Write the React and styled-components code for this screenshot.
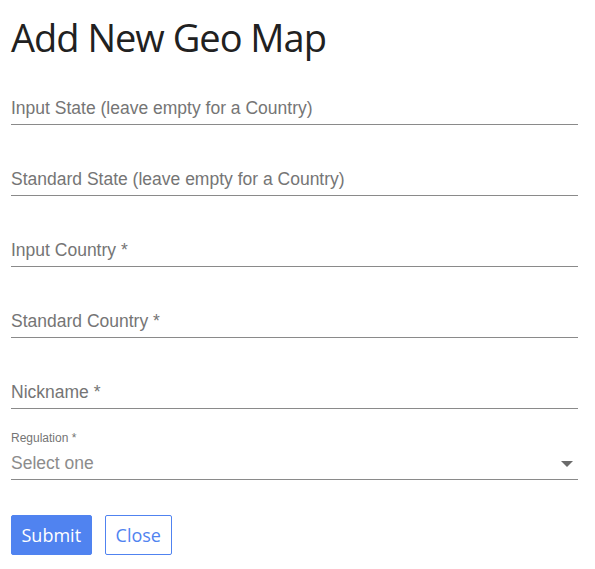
import styled, { createGlobalStyle } from "styled-components";

const Global = createGlobalStyle`
    body {
        margin: 0;
        background: #fff;
    }
`

const Page = styled.div`
    padding: 11px 17px 0 11px;
    font-family: "Liberation Sans", Arial, sans-serif;
`

const Title = styled.h1`
    margin: 0 0 26px;
    font-family: "Open Sans", sans-serif;
    font-weight: 400;
    font-size: 38px;
    line-height: 52px;
    color: #212121;
    letter-spacing: -1px;
`

const Field = styled.div`
    display: flex;
    flex-direction: column;
    justify-content: flex-end;
    height: 71px;
    border-bottom: 1px solid #8a8a8a;
    box-sizing: border-box;
    &:first-of-type {
        height: 36px;
    }
`

const Input = styled.input`
    border: none;
    outline: none;
    padding: 0 0 5px;
    font-family: inherit;
    font-size: 17.5px;
    color: #333;
    background: transparent;
    &::placeholder {
        color: #757575;
    }
`

const SmallLabel = styled.label`
    font-size: 12px;
    color: #757575;
    margin-bottom: 8px;
`

const SelectRow = styled.div`
    display: flex;
    align-items: center;
    justify-content: space-between;
    padding: 0 5px 5px 0;
    font-size: 17.5px;
    color: #8c8c8c;
`

const Arrow = styled.span`
    width: 0;
    height: 0;
    border-left: 6px solid transparent;
    border-right: 6px solid transparent;
    border-top: 6px solid #6b6b6b;
`

const Buttons = styled.div`
    display: flex;
    gap: 13px;
    margin-top: 35px;
`

const Button = styled.button`
    height: 40px;
    padding: 0 ${({ primary }) => primary ? '9.5px' : '10px'};
    border-radius: 2px;
    border: 1px solid #5083f0;
    background: ${({ primary }) => primary ? '#5083f0' : '#fff'};
    color: ${({ primary }) => primary ? '#fff' : '#5083f0'};
    font-family: "Open Sans", sans-serif;
    font-size: 18px;
    cursor: pointer;
`

export default function App() {
    return (
        <>
            <Global />
            <Page>
                <Title>Add New Geo Map</Title>
                <Field><Input placeholder="Input State (leave empty for a Country)" /></Field>
                <Field><Input placeholder="Standard State (leave empty for a Country)" /></Field>
                <Field><Input placeholder="Input Country *" /></Field>
                <Field><Input placeholder="Standard Country *" /></Field>
                <Field><Input placeholder="Nickname *" /></Field>
                <Field>
                    <SmallLabel>Regulation *</SmallLabel>
                    <SelectRow>
                        Select one
                        <Arrow />
                    </SelectRow>
                </Field>
                <Buttons>
                    <Button primary>Submit</Button>
                    <Button>Close</Button>
                </Buttons>
            </Page>
        </>
    );
}
